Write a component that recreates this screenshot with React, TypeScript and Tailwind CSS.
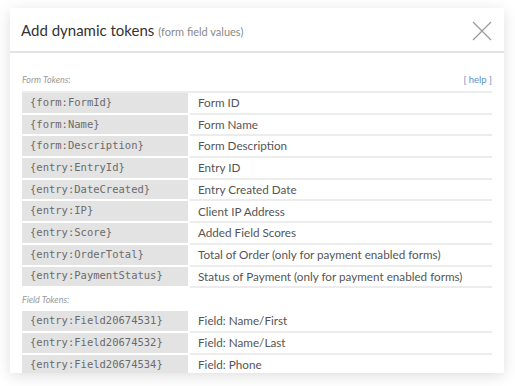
import React from "react";

const formTokens: [string, string][] = [
  ["{form:FormId}", "Form ID"],
  ["{form:Name}", "Form Name"],
  ["{form:Description}", "Form Description"],
  ["{entry:EntryId}", "Entry ID"],
  ["{entry:DateCreated}", "Entry Created Date"],
  ["{entry:IP}", "Client IP Address"],
  ["{entry:Score}", "Added Field Scores"],
  ["{entry:OrderTotal}", "Total of Order (only for payment enabled forms)"],
  ["{entry:PaymentStatus}", "Status of Payment (only for payment enabled forms)"],
];

const fieldTokens: [string, string][] = [
  ["{entry:Field20674531}", "Field: Name/First"],
  ["{entry:Field20674532}", "Field: Name/Last"],
  ["{entry:Field20674534}", "Field: Phone"],
];

function Rows({ rows }: { rows: [string, string][] }) {
  return (
    <div className="flex flex-col">
      {rows.map(([t, d]) => (
        <div key={t} className="flex h-[21.7px]">
          <div className="w-[166px] shrink-0 bg-[#e3e3e3] border-b-2 border-white pl-[8px] flex items-center text-[10.5px] text-[#6b6b6b] font-['DejaVu_Sans_Mono',monospace]">
            {t}
          </div>
          <div className="w-[2px] shrink-0 bg-white" />
          <div className="flex-1 border-b-2 border-[#ececec] pl-[8px] flex items-center text-[11.7px] text-[#555] font-['Lato',sans-serif]">
            {d}
          </div>
        </div>
      ))}
    </div>
  );
}

export default function App() {
  return (
    <div className="bg-white w-[515px] h-[386px] pt-[8px] pl-[10px] font-['Lato',sans-serif]">
      <div className="w-[494px] h-[365px] bg-white overflow-hidden shadow-[0_3px_14px_rgba(0,0,0,0.13)]">
        <div className="h-[45px] border-b-2 border-[#e2e2e2] flex items-center justify-between pl-[11px] pr-[12px]">
          <div className="flex items-baseline pt-[2px]">
            <span className="text-[15px] text-[#333]">Add dynamic tokens</span>
            <span className="text-[11px] text-[#8a8a8a] ml-[4px]">(form field values)</span>
          </div>
          <svg width="20" height="20" viewBox="0 0 20 20" className="mt-[2px]">
            <path d="M1 1 L19 19 M19 1 L1 19" stroke="#9a9a9a" strokeWidth="1.2" fill="none" />
          </svg>
        </div>
        <div className="px-[12px]">
          <div className="flex items-center justify-between h-[40px] pt-[16px] border-b-2 border-[#ececec]">
            <span className="text-[9px] italic text-[#9a9a9a]">Form Tokens:</span>
            <span className="text-[9.5px] text-[#5f8fc8]">[ help ]</span>
          </div>
          <Rows rows={formTokens} />
          <div className="h-[23px] flex items-center">
            <span className="text-[9px] italic text-[#9a9a9a]">Field Tokens:</span>
          </div>
          <Rows rows={fieldTokens} />
        </div>
      </div>
    </div>
  );
}
